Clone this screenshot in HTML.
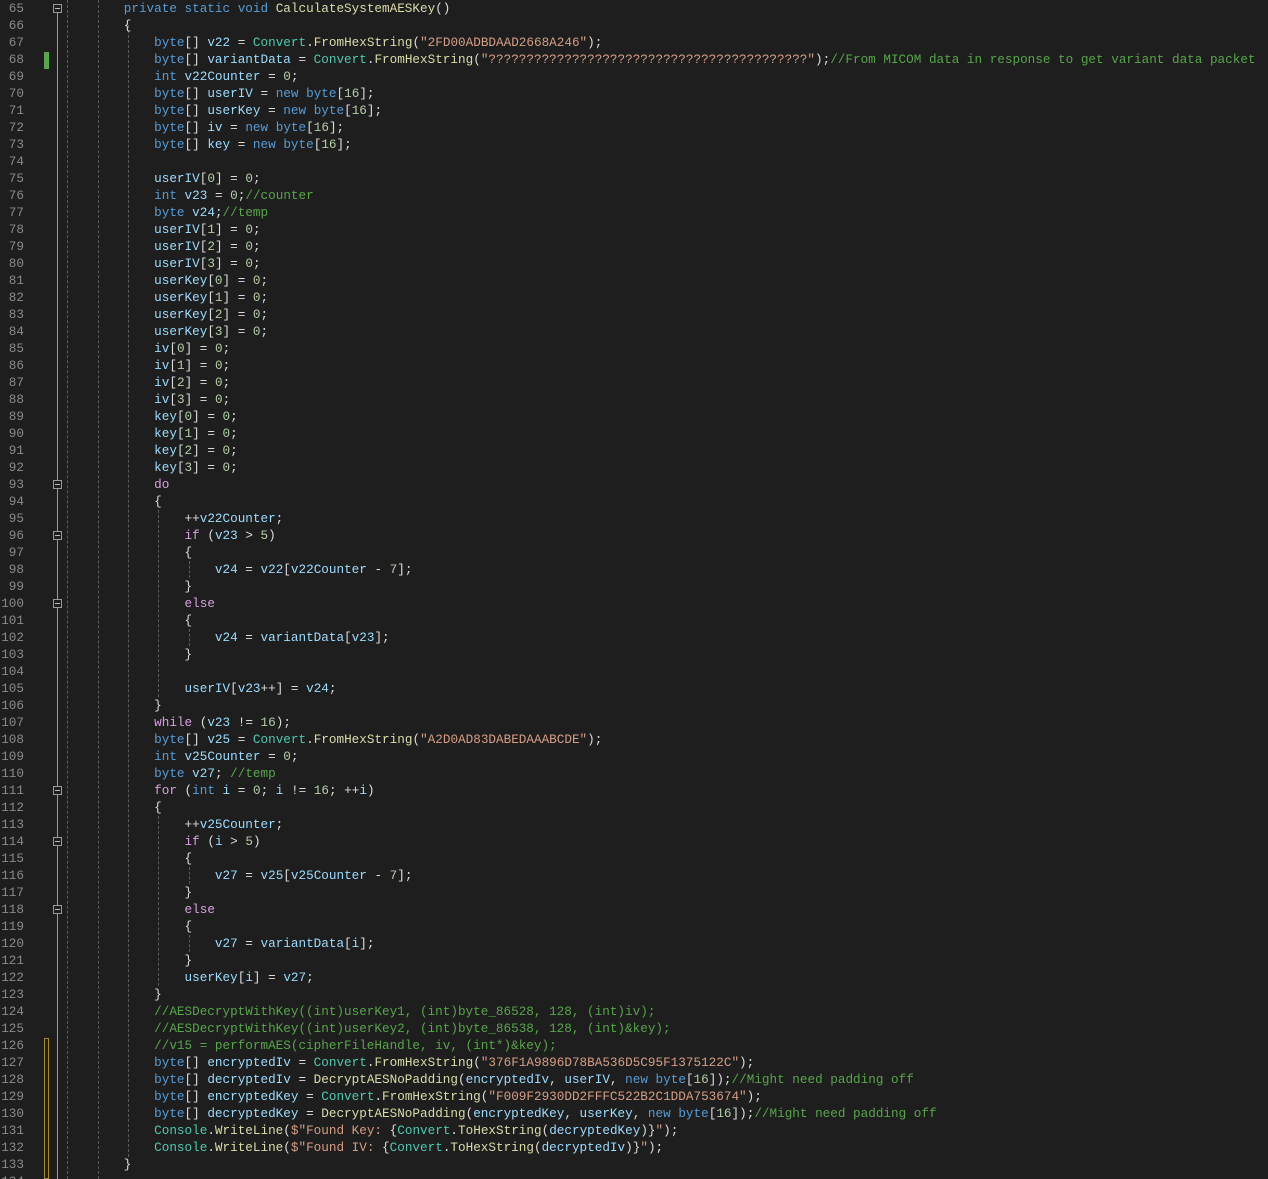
<!DOCTYPE html>
<html><head><meta charset="utf-8">
<style>
html,body{margin:0;padding:0;background:#1e1e1e;width:1268px;height:1179px;overflow:hidden}
#ed{position:relative;width:1268px;height:1179px;font-family:"Liberation Mono",monospace;font-size:12.67px;}
.ln{position:absolute;left:0;width:24px;text-align:right;color:#8a8a8a;height:17px;line-height:17px}
.cl{position:absolute;left:63px;white-space:pre;height:17px;line-height:17px;color:#dcdcdc}
.k{color:#569cd6}.c{color:#d8a0df}.v{color:#9cdcfe}.t{color:#4ec9b0}.m{color:#dcdcaa}.s{color:#d69d85}.n{color:#b5cea8}.cm{color:#57a64a}
.g{position:absolute;width:0;border-left:1px dashed #5a5a5a}
.fb{position:absolute;left:53px;width:7px;height:7px;border:1px solid #999;background:#1e1e1e}
.fb:after{content:"";position:absolute;left:1px;top:3px;width:5px;height:1px;background:#bbb}
</style></head><body><div id="ed">
<div style="position:absolute;left:57px;top:12px;width:1px;height:1167px;background:#9a9a9a"></div>
<div class="g" style="left:67px;top:0;height:1179px"></div>
<div class="g" style="left:98px;top:0;height:1179px"></div>
<div class="g" style="left:128px;top:25px;height:1132px"></div>
<div class="g" style="left:158px;top:510px;height:187px"></div>
<div class="g" style="left:158px;top:816px;height:170px"></div>
<div class="g" style="left:189px;top:561px;height:17px"></div>
<div class="g" style="left:189px;top:629px;height:17px"></div>
<div class="g" style="left:189px;top:867px;height:17px"></div>
<div class="g" style="left:189px;top:935px;height:17px"></div>
<div style="position:absolute;left:44px;top:52px;width:5px;height:17px;background:#57a64a"></div>
<div style="position:absolute;left:44px;top:1038px;width:4px;height:141px;border:1px solid #a08a2a;box-sizing:border-box;width:5px"></div>
<div class="fb" style="top:4px"></div>
<div class="fb" style="top:480px"></div>
<div class="fb" style="top:531px"></div>
<div class="fb" style="top:599px"></div>
<div class="fb" style="top:786px"></div>
<div class="fb" style="top:837px"></div>
<div class="fb" style="top:905px"></div>
<div id="lines"></div>
</div>
<script>
var L=[
'        <span class=k>private static void</span> <span class=m>CalculateSystemAESKey</span>()',
'        {',
'            <span class=k>byte</span>[] <span class=v>v22</span> = <span class=t>Convert</span>.<span class=m>FromHexString</span>(<span class=s>"2FD00ADBDAAD2668A246"</span>);',
'            <span class=k>byte</span>[] <span class=v>variantData</span> = <span class=t>Convert</span>.<span class=m>FromHexString</span>(<span class=s>"??????????????????????????????????????????"</span>);<span class=cm>//From MICOM data in response to get variant data packet</span>',
'            <span class=k>int</span> <span class=v>v22Counter</span> = <span class=n>0</span>;',
'            <span class=k>byte</span>[] <span class=v>userIV</span> = <span class=k>new</span> <span class=k>byte</span>[<span class=n>16</span>];',
'            <span class=k>byte</span>[] <span class=v>userKey</span> = <span class=k>new</span> <span class=k>byte</span>[<span class=n>16</span>];',
'            <span class=k>byte</span>[] <span class=v>iv</span> = <span class=k>new</span> <span class=k>byte</span>[<span class=n>16</span>];',
'            <span class=k>byte</span>[] <span class=v>key</span> = <span class=k>new</span> <span class=k>byte</span>[<span class=n>16</span>];',
'',
'            <span class=v>userIV</span>[<span class=n>0</span>] = <span class=n>0</span>;',
'            <span class=k>int</span> <span class=v>v23</span> = <span class=n>0</span>;<span class=cm>//counter</span>',
'            <span class=k>byte</span> <span class=v>v24</span>;<span class=cm>//temp</span>',
'            <span class=v>userIV</span>[<span class=n>1</span>] = <span class=n>0</span>;',
'            <span class=v>userIV</span>[<span class=n>2</span>] = <span class=n>0</span>;',
'            <span class=v>userIV</span>[<span class=n>3</span>] = <span class=n>0</span>;',
'            <span class=v>userKey</span>[<span class=n>0</span>] = <span class=n>0</span>;',
'            <span class=v>userKey</span>[<span class=n>1</span>] = <span class=n>0</span>;',
'            <span class=v>userKey</span>[<span class=n>2</span>] = <span class=n>0</span>;',
'            <span class=v>userKey</span>[<span class=n>3</span>] = <span class=n>0</span>;',
'            <span class=v>iv</span>[<span class=n>0</span>] = <span class=n>0</span>;',
'            <span class=v>iv</span>[<span class=n>1</span>] = <span class=n>0</span>;',
'            <span class=v>iv</span>[<span class=n>2</span>] = <span class=n>0</span>;',
'            <span class=v>iv</span>[<span class=n>3</span>] = <span class=n>0</span>;',
'            <span class=v>key</span>[<span class=n>0</span>] = <span class=n>0</span>;',
'            <span class=v>key</span>[<span class=n>1</span>] = <span class=n>0</span>;',
'            <span class=v>key</span>[<span class=n>2</span>] = <span class=n>0</span>;',
'            <span class=v>key</span>[<span class=n>3</span>] = <span class=n>0</span>;',
'            <span class=c>do</span>',
'            {',
'                ++<span class=v>v22Counter</span>;',
'                <span class=c>if</span> (<span class=v>v23</span> &gt; <span class=n>5</span>)',
'                {',
'                    <span class=v>v24</span> = <span class=v>v22</span>[<span class=v>v22Counter</span> - <span class=n>7</span>];',
'                }',
'                <span class=c>else</span>',
'                {',
'                    <span class=v>v24</span> = <span class=v>variantData</span>[<span class=v>v23</span>];',
'                }',
'',
'                <span class=v>userIV</span>[<span class=v>v23</span>++] = <span class=v>v24</span>;',
'            }',
'            <span class=c>while</span> (<span class=v>v23</span> != <span class=n>16</span>);',
'            <span class=k>byte</span>[] <span class=v>v25</span> = <span class=t>Convert</span>.<span class=m>FromHexString</span>(<span class=s>"A2D0AD83DABEDAAABCDE"</span>);',
'            <span class=k>int</span> <span class=v>v25Counter</span> = <span class=n>0</span>;',
'            <span class=k>byte</span> <span class=v>v27</span>; <span class=cm>//temp</span>',
'            <span class=c>for</span> (<span class=k>int</span> <span class=v>i</span> = <span class=n>0</span>; <span class=v>i</span> != <span class=n>16</span>; ++<span class=v>i</span>)',
'            {',
'                ++<span class=v>v25Counter</span>;',
'                <span class=c>if</span> (<span class=v>i</span> &gt; <span class=n>5</span>)',
'                {',
'                    <span class=v>v27</span> = <span class=v>v25</span>[<span class=v>v25Counter</span> - <span class=n>7</span>];',
'                }',
'                <span class=c>else</span>',
'                {',
'                    <span class=v>v27</span> = <span class=v>variantData</span>[<span class=v>i</span>];',
'                }',
'                <span class=v>userKey</span>[<span class=v>i</span>] = <span class=v>v27</span>;',
'            }',
'            <span class=cm>//AESDecryptWithKey((int)userKey1, (int)byte_86528, 128, (int)iv);</span>',
'            <span class=cm>//AESDecryptWithKey((int)userKey2, (int)byte_86538, 128, (int)&amp;key);</span>',
'            <span class=cm>//v15 = performAES(cipherFileHandle, iv, (int*)&amp;key);</span>',
'            <span class=k>byte</span>[] <span class=v>encryptedIv</span> = <span class=t>Convert</span>.<span class=m>FromHexString</span>(<span class=s>"376F1A9896D78BA536D5C95F1375122C"</span>);',
'            <span class=k>byte</span>[] <span class=v>decryptedIv</span> = <span class=m>DecryptAESNoPadding</span>(<span class=v>encryptedIv</span>, <span class=v>userIV</span>, <span class=k>new</span> <span class=k>byte</span>[<span class=n>16</span>]);<span class=cm>//Might need padding off</span>',
'            <span class=k>byte</span>[] <span class=v>encryptedKey</span> = <span class=t>Convert</span>.<span class=m>FromHexString</span>(<span class=s>"F009F2930DD2FFFC522B2C1DDA753674"</span>);',
'            <span class=k>byte</span>[] <span class=v>decryptedKey</span> = <span class=m>DecryptAESNoPadding</span>(<span class=v>encryptedKey</span>, <span class=v>userKey</span>, <span class=k>new</span> <span class=k>byte</span>[<span class=n>16</span>]);<span class=cm>//Might need padding off</span>',
'            <span class=t>Console</span>.<span class=m>WriteLine</span>(<span class=s>$"Found Key: </span>{<span class=t>Convert</span>.<span class=m>ToHexString</span>(<span class=v>decryptedKey</span>)}<span class=s>"</span>);',
'            <span class=t>Console</span>.<span class=m>WriteLine</span>(<span class=s>$"Found IV: </span>{<span class=t>Convert</span>.<span class=m>ToHexString</span>(<span class=v>decryptedIv</span>)}<span class=s>"</span>);',
'        }',
''
];
var h='';
for(var i=0;i<L.length;i++){var y=i*17;
h+='<div class="ln" style="top:'+y+'px">'+(65+i)+'</div><div class="cl" style="top:'+y+'px">'+L[i]+'</div>';}
document.getElementById('lines').innerHTML=h;
</script>
</body></html>
